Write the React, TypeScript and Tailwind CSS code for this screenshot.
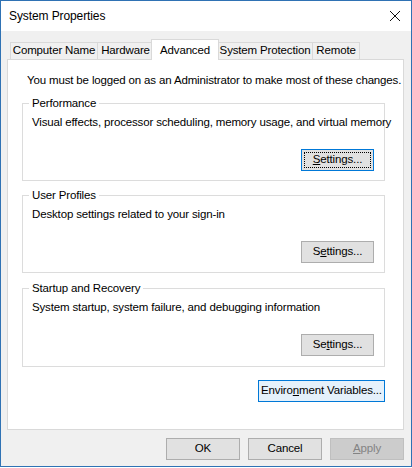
import React from "react";

const Btn = ({
  children,
  w = "w-[73px]",
  variant = "normal",
}: {
  children: React.ReactNode;
  w?: string;
  variant?: "normal" | "focus" | "env" | "disabled";
}) => {
  const base = `${w} h-[22px] flex items-center justify-center leading-none border whitespace-nowrap`;
  if (variant === "focus")
    return (
      <div className={`${base} border-[#0078d7] bg-[#e1e1e1] p-[2px]`}>
        <div className="w-full h-full flex items-center justify-center border border-dotted border-black">
          {children}
        </div>
      </div>
    );
  if (variant === "env")
    return <div className={`${base} border-[#0078d7] bg-[#e5f1fb]`}>{children}</div>;
  if (variant === "disabled")
    return <div className={`${base} border-[#bfbfbf] bg-[#cccccc] text-[#838383]`}>{children}</div>;
  return <div className={`${base} border-[#adadad] bg-[#e1e1e1]`}>{children}</div>;
};

const Group = ({
  label,
  desc,
  btn,
  h,
  mt,
}: {
  label: string;
  desc: string;
  btn: React.ReactNode;
  h: string;
  mt: string;
}) => (
  <div className={`relative w-[363px] ${h} ${mt} border border-[#dcdcdc] pt-[10px] pl-[9px] pr-[10px]`}>
    <span className="absolute -top-[9px] left-[6px] px-[3px] bg-white leading-[16px] whitespace-nowrap">{label}</span>
    <div className="leading-[16px] whitespace-nowrap">{desc}</div>
    <div className="flex justify-end mt-[19px]">{btn}</div>
  </div>
);

export default function App() {
  return (
    <div
      className="w-[412px] h-[467px] border border-[#2f72b4] bg-[#f0f0f0] flex flex-col text-[11.5px] tracking-[-0.15px] text-black"
      style={{ fontFamily: '"Liberation Sans", Arial, sans-serif' }}
    >
      {/* Title bar */}
      <div className="h-[30px] bg-white flex items-center justify-between pl-[8px] pr-[10px]">
        <span className="text-[12px] tracking-[-0.1px] whitespace-nowrap">System Properties</span>
        <svg width="12" height="12" viewBox="0 0 12 12">
          <path d="M1 1 L11 11 M11 1 L1 11" stroke="#111" strokeWidth="1" fill="none" />
        </svg>
      </div>

      <div className="flex-1 flex flex-col pt-[8px] pl-[6px] pr-[7px]">
        {/* Tabs */}
        <div className="flex items-end h-[20px] pl-[3px] whitespace-nowrap">
          <div className="w-[87px] h-[17px] border-l border-t border-[#d9d9d9] bg-[#f0f0f0] flex items-center justify-center">
            Computer Name
          </div>
          <div className="w-[56px] h-[17px] border-l border-t border-[#d9d9d9] bg-[#f0f0f0] flex items-center justify-center">
            Hardware
          </div>
          <div className="relative z-10 w-[68px] h-[21px] -mb-[1px] -mx-[2px] border-l border-t border-r border-[#d9d9d9] bg-white flex items-start justify-center pt-[2px]">
            Advanced
          </div>
          <div className="w-[95px] h-[17px] border-l border-t border-[#d9d9d9] bg-[#f0f0f0] flex items-center justify-center">
            System Protection
          </div>
          <div className="w-[48px] h-[17px] border-l border-t border-r border-[#d9d9d9] bg-[#f0f0f0] flex items-center justify-center">
            Remote
          </div>
        </div>

        {/* Panel */}
        <div className="h-[371px] border border-[#d9d9d9] bg-white flex flex-col pl-[14px] pt-[12px]">
          <div className="leading-[16px] pl-[5px] whitespace-nowrap">
            You must be logged on as an Administrator to make most of these changes.
          </div>

          <Group
            label="Performance"
            desc="Visual effects, processor scheduling, memory usage, and virtual memory"
            h="h-[78px]"
            mt="mt-[15px]"
            btn={
              <Btn variant="focus">
                <span>
                  <u>S</u>ettings...
                </span>
              </Btn>
            }
          />
          <Group
            label="User Profiles"
            desc="Desktop settings related to your sign-in"
            h="h-[78px]"
            mt="mt-[14px]"
            btn={
              <Btn>
                <span>
                  S<u>e</u>ttings...
                </span>
              </Btn>
            }
          />
          <Group
            label="Startup and Recovery"
            desc="System startup, system failure, and debugging information"
            h="h-[79px]"
            mt="mt-[15px]"
            btn={
              <Btn>
                <span>
                  Se<u>t</u>tings...
                </span>
              </Btn>
            }
          />

          <div className="w-[363px] flex justify-end mt-[13px]">
            <Btn variant="env" w="w-[127px]">
              <span>
                Enviro<u>n</u>ment Variables...
              </span>
            </Btn>
          </div>
        </div>

        {/* Bottom buttons */}
        <div className="flex justify-end gap-[8px] mt-[8px]">
          <Btn w="w-[74px]">OK</Btn>
          <Btn w="w-[74px]">Cancel</Btn>
          <Btn w="w-[74px]" variant="disabled">
            <span>
              <u>A</u>pply
            </span>
          </Btn>
        </div>
      </div>
    </div>
  );
}
